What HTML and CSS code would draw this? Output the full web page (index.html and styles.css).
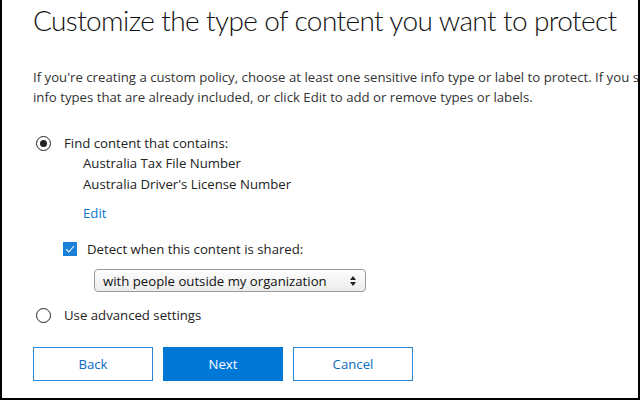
FILE: index.html
```html
<!DOCTYPE html>
<html>
<head>
<meta charset="utf-8">
<link rel="stylesheet" href="styles.css">
</head>
<body>
<div class="frame">
  <h1 class="title">Customize the type of content you want to protect</h1>
  <p class="intro">
    <span class="line">If you're creating a custom policy, choose at least one sensitive info type or label to protect. If you select a template, you'll see the sensitive</span>
    <span class="line">info types that are already included, or click Edit to add or remove types or labels.</span>
  </p>

  <div class="option">
    <span class="radio checked"></span>
    <div class="option-body">
      <div class="option-label">Find content that contains:</div>
      <div class="types">
        <div class="type">Australia Tax File Number</div>
        <div class="type">Australia Driver's License Number</div>
        <a class="edit">Edit</a>
      </div>
    </div>
  </div>

  <div class="check-row">
    <span class="checkbox">
      <svg width="10" height="8" viewBox="0 0 10 8"><path d="M1 4.2 L3.8 7 L9 1" fill="none" stroke="#fff" stroke-width="1.1"/></svg>
    </span>
    <span class="check-label">Detect when this content is shared:</span>
  </div>

  <div class="select-row">
    <div class="select">
      <span>with people outside my organization</span>
      <svg class="arrows" width="8" height="12" viewBox="0 0 8 12"><path d="M4 1 L7 5 H1 Z M4 11 L7 7 H1 Z" fill="#222"/></svg>
    </div>
  </div>

  <div class="option second">
    <span class="radio"></span>
    <div class="option-body">
      <div class="option-label">Use advanced settings</div>
    </div>
  </div>

  <div class="buttons">
    <button class="btn">Back</button>
    <button class="btn primary">Next</button>
    <button class="btn">Cancel</button>
  </div>
</div>
</body>
</html>
```
FILE: styles.css
```css
html, body {
  margin: 0;
  padding: 0;
  background: #fff;
}
body {
  width: 640px;
  height: 401px;
  overflow: hidden;
  font-family: "Open Sans", "Liberation Sans", sans-serif;
  color: #222;
}
.frame {
  box-sizing: border-box;
  width: 640px;
  height: 400px;
  border-left: 2px solid #000;
  border-right: 2px solid #000;
  border-bottom: 2px solid #000;
  padding-left: 31px;
  overflow: hidden;
}
.title {
  margin: 0;
  padding-top: 1px;
  font-family: "Lato", "Open Sans", sans-serif;
  font-weight: 300;
  font-size: 28px;
  line-height: 38px;
  letter-spacing: -0.6px;
  color: #111;
  white-space: nowrap;
}
.intro {
  margin: 28px 0 0 0;
  font-size: 13.2px;
  line-height: 20px;
  color: #333;
}
.line {
  display: block;
  white-space: nowrap;
}
.option {
  display: flex;
  align-items: flex-start;
  margin-top: 26px;
}
.radio {
  box-sizing: border-box;
  width: 15px;
  height: 15px;
  border: 1.5px solid #222;
  border-radius: 50%;
  margin: 3px 13px 0 3px;
  display: flex;
  align-items: center;
  justify-content: center;
  flex: none;
}
.radio.checked::after {
  content: "";
  width: 7px;
  height: 7px;
  border-radius: 50%;
  background: #222;
}
.option-label {
  font-size: 13.2px;
  line-height: 20px;
  color: #222;
}
.types {
  padding-left: 19px;
}
.type {
  font-size: 13.2px;
  line-height: 20.5px;
  color: #222;
}
.edit {
  display: block;
  margin-top: 9px;
  font-size: 13.2px;
  line-height: 20px;
  color: #0a78d1;
}
.check-row {
  display: flex;
  align-items: center;
  margin-top: 16px;
  padding-left: 30px;
}
.checkbox {
  width: 14px;
  height: 14px;
  background: #1a7fd6;
  display: flex;
  align-items: center;
  justify-content: center;
  margin-right: 10px;
}
.check-label {
  font-size: 13.2px;
  line-height: 20px;
  color: #222;
}
.select-row {
  margin-top: 10px;
  padding-left: 61px;
}
.select {
  box-sizing: border-box;
  width: 272px;
  height: 23px;
  border: 1px solid #9a9a9a;
  border-radius: 4px;
  background: linear-gradient(#fdfdfd, #ececec);
  display: flex;
  align-items: center;
  justify-content: space-between;
  padding: 0 8px 0 8px;
  font-size: 13.2px;
  color: #111;
}
.option.second {
  margin-top: 13px;
}
.buttons {
  display: flex;
  gap: 10px;
  margin-top: 22px;
}
.btn {
  box-sizing: border-box;
  width: 120px;
  height: 34px;
  border: 1px solid #2b88d8;
  background: #fff;
  color: #0a6cc2;
  font-family: "Open Sans", "Liberation Sans", sans-serif;
  font-size: 13.2px;
  padding: 0;
}
.btn.primary {
  background: #0078d7;
  border-color: #0078d7;
  color: #fff;
}
```
